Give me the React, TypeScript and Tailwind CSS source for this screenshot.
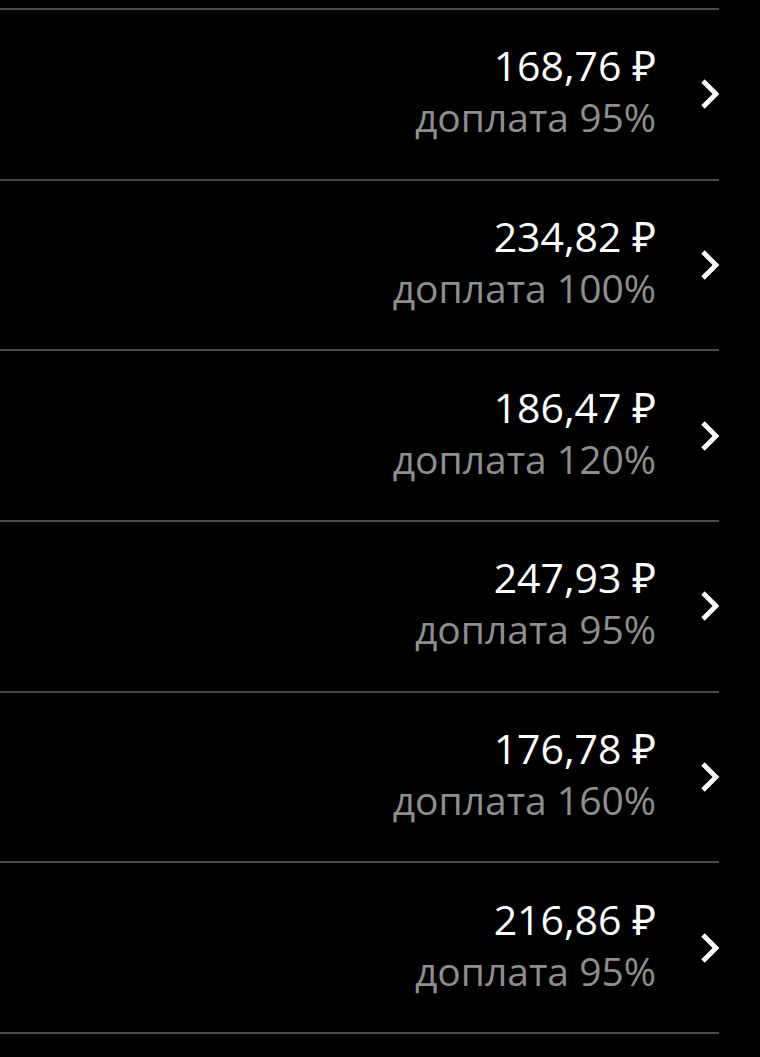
const rows = [
  { price: '168,76 ₽', extra: 'доплата 95%' },
  { price: '234,82 ₽', extra: 'доплата 100%' },
  { price: '186,47 ₽', extra: 'доплата 120%' },
  { price: '247,93 ₽', extra: 'доплата 95%' },
  { price: '176,78 ₽', extra: 'доплата 160%' },
  { price: '216,86 ₽', extra: 'доплата 95%' },
]

function Chevron() {
  return (
    <svg width="24" height="34" viewBox="0 0 24 34" fill="none">
      <path d="M5 4 L18 17 L5 30" stroke="white" strokeWidth="4.8" strokeLinecap="butt" strokeLinejoin="miter" />
    </svg>
  )
}

export default function App() {
  return (
    <div className="min-h-screen bg-black pt-[8px]" style={{ fontFamily: '"Open Sans", "Noto Sans", sans-serif' }}>
      <div className="w-[719px]">
        <div className="h-[2px] bg-[#4a4a4a]" />
        {rows.map((row) => (
          <div key={row.price}>
            <div className="flex h-[168.67px] items-center justify-end">
              <div className="flex flex-col items-end pb-[4px]">
                <span className="text-[41px] leading-[50px] text-white">{row.price}</span>
                <span className="text-[39px] leading-[54px] text-[#8e8e8e]">{row.extra}</span>
              </div>
              <div className="ml-[42px] mr-[-3px] flex items-center">
                <Chevron />
              </div>
            </div>
            <div className="h-[2px] bg-[#4a4a4a]" />
          </div>
        ))}
      </div>
    </div>
  )
}
